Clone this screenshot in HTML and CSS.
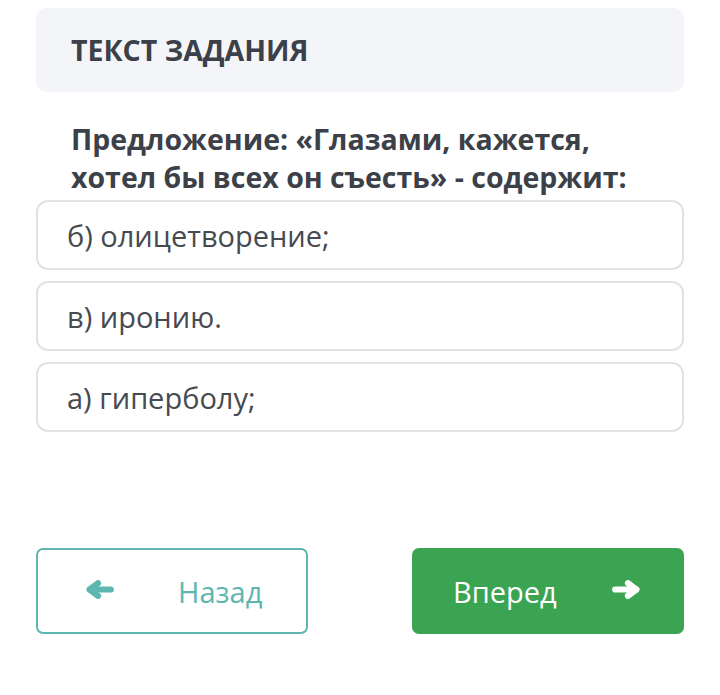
FILE: index.html
```html
<!DOCTYPE html>
<html lang="ru">
<head>
<meta charset="utf-8">
<link rel="stylesheet" href="styles.css">
</head>
<body>
<div class="page">
  <div class="task-head">ТЕКСТ ЗАДАНИЯ</div>
  <div class="question">Предложение: «Глазами, кажется, хотел бы всех он съесть» - содержит:</div>
  <div class="options">
    <div class="option">б) олицетворение;</div>
    <div class="option">в) иронию.</div>
    <div class="option">а) гиперболу;</div>
  </div>
  <div class="nav">
    <button class="btn btn-back">
      <svg class="arrow" viewBox="0 0 28 19" aria-hidden="true"><polyline points="12,3.2 3.6,9.5 12,15.8" /><line x1="4" y1="9.5" x2="24.8" y2="9.5" /></svg>
      <span>Назад</span>
    </button>
    <button class="btn btn-next">
      <span>Вперед</span>
      <svg class="arrow" viewBox="0 0 28 19" aria-hidden="true"><polyline points="16,3.2 24.4,9.5 16,15.8" /><line x1="3.2" y1="9.5" x2="24" y2="9.5" /></svg>
    </button>
  </div>
</div>
</body>
</html>
```

FILE: styles.css
```css
* { box-sizing: border-box; }
html, body { margin: 0; padding: 0; background: #fff; }
body { font-family: "Open Sans", "Noto Sans", sans-serif; }
.page { padding: 8px 36px 0 36px; width: 720px; }
.task-head {
  background: #f4f5f8;
  border-radius: 10px;
  height: 84px;
  padding-left: 35px;
  display: flex;
  align-items: center;
  font-weight: 700;
  font-size: 28.5px;
  color: #3c4048;
}
.question {
  margin-top: 28px;
  padding: 0 20px 0 35px;
  font-weight: 700;
  font-size: 28.5px;
  line-height: 38px;
  color: #3c4048;
  height: 80px;
  overflow: hidden;
}
.options { display: flex; flex-direction: column; gap: 11px; }
.option {
  height: 70px;
  border: 2px solid #e0e2e5;
  border-radius: 12px;
  padding-left: 29px;
  display: flex;
  align-items: center;
  font-size: 29px;
  color: #474a4f;
}
.nav { display: flex; justify-content: space-between; margin-top: 116px; }
.btn {
  width: 272px;
  height: 86px;
  border-radius: 7px;
  display: flex;
  align-items: center;
  font-family: "Open Sans", "Noto Sans", sans-serif;
  font-size: 29px;
  cursor: pointer;
  padding: 0;
}
.btn-back {
  background: #fff;
  border: 2px solid #5db6b0;
  color: #5db6b0;
  padding-left: 48px;
  gap: 64px;
}
.btn-back .arrow { stroke: #5db6b0; }
.btn-next {
  background: #3aa453;
  border: 2px solid #3aa453;
  color: #fff;
  padding-left: 39px;
  gap: 55px;
}
.btn-next .arrow { stroke: #fff; }
.arrow {
  width: 28px;
  height: 19px;
  display: block;
  fill: none;
  stroke-width: 6.2;
  stroke-linecap: round;
  stroke-linejoin: round;
  margin-top: -4px;
}
```
